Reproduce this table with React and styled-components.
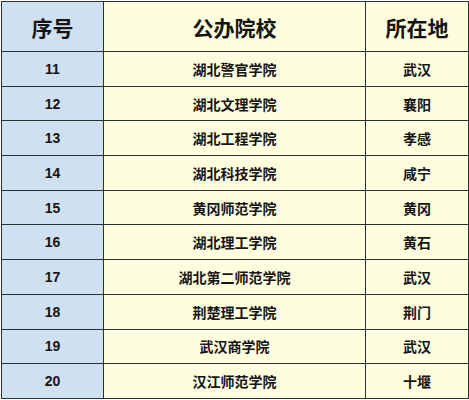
import React from "react";
import styled, { createGlobalStyle } from "styled-components";

const GlobalStyle = createGlobalStyle`
  html, body {
    margin: 0;
    padding: 0;
    background: #ffffff;
  }
`;

const rows = [
  { no: 11, school: "湖北警官学院", city: "武汉" },
  { no: 12, school: "湖北文理学院", city: "襄阳" },
  { no: 13, school: "湖北工程学院", city: "孝感" },
  { no: 14, school: "湖北科技学院", city: "咸宁" },
  { no: 15, school: "黄冈师范学院", city: "黄冈" },
  { no: 16, school: "湖北理工学院", city: "黄石" },
  { no: 17, school: "湖北第二师范学院", city: "武汉" },
  { no: 18, school: "荆楚理工学院", city: "荆门" },
  { no: 19, school: "武汉商学院", city: "武汉" },
  { no: 20, school: "汉江师范学院", city: "十堰" },
];

const Table = styled.table`
  width: 467px;
  height: 397px;
  margin: 1px 0 0 1px;
  border-collapse: collapse;
  table-layout: fixed;
  font-family: "Liberation Sans", "Noto Sans CJK SC", sans-serif;
  color: #141414;
  border: 1.5px solid #263232;
`;

const HeadCell = styled.th`
  height: 49px;
  padding: 0;
  font-size: 21px;
  font-weight: bold;
  text-align: center;
  border: 1px solid #263232;
  background: ${(p) => (p.$blue ? "#cfe0f0" : "#fefedf")};
`;

const Cell = styled.td`
  height: 33.7px;
  padding: 0;
  font-size: 14px;
  font-weight: bold;
  text-align: center;
  border: 1px solid #263232;
  background: ${(p) => (p.$blue ? "#cfe0f0" : "#fefedf")};
`;

const App = () => {
  return (
    <>
      <GlobalStyle />
      <Table>
        <colgroup>
          <col style={{ width: 102 }} />
          <col style={{ width: 262 }} />
          <col style={{ width: 103 }} />
        </colgroup>
        <thead>
          <tr>
            <HeadCell $blue>序号</HeadCell>
            <HeadCell>公办院校</HeadCell>
            <HeadCell>所在地</HeadCell>
          </tr>
        </thead>
        <tbody>
          {rows.map((r) => (
            <tr key={r.no}>
              <Cell $blue>{r.no}</Cell>
              <Cell>{r.school}</Cell>
              <Cell>{r.city}</Cell>
            </tr>
          ))}
        </tbody>
      </Table>
    </>
  );
};

export default App;
